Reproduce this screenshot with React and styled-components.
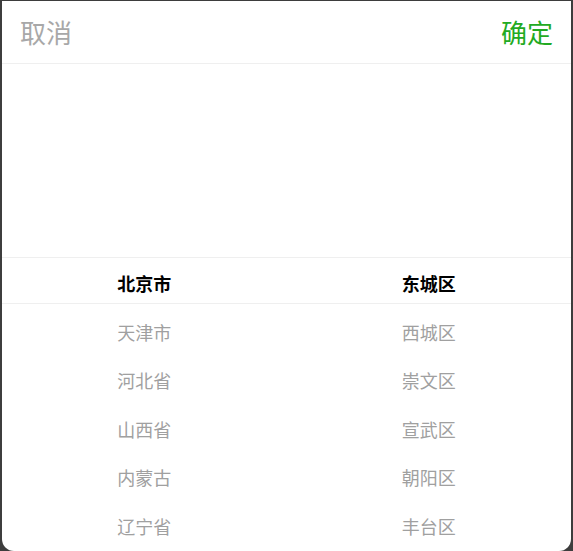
import styled, { createGlobalStyle } from "styled-components";

const provinces = ["北京市", "天津市", "河北省", "山西省", "内蒙古", "辽宁省"];
const districts = ["东城区", "西城区", "崇文区", "宣武区", "朝阳区", "丰台区"];

const GlobalStyle = createGlobalStyle`
    html, body {
        margin: 0;
        padding: 0;
        height: 100%;
        background: #3d3d3d;
        overflow: hidden;
    }
    body {
        font-family: "Noto Sans CJK SC", "Noto Sans", sans-serif;
    }
`;

export default function App() {
    return (
        <>
            <GlobalStyle />
            <Sheet>
                <Toolbar>
                    <ToolButton>取消</ToolButton>
                    <ToolButton $primary>确定</ToolButton>
                </Toolbar>
                <PickerView>
                    <Indicator />
                    <Column list={provinces} selected={0} />
                    <Column list={districts} selected={0} />
                </PickerView>
            </Sheet>
        </>
    );
}

function Column({ list, selected }) {
    return (
        <ColumnWrap>
            {list.map((name, i) => (
                <Item key={name} $active={i === selected}>
                    {name}
                </Item>
            ))}
        </ColumnWrap>
    );
}

const Sheet = styled.div`
    margin: 1px 2px 0 2px;
    height: calc(100vh - 1px);
    background: #fff;
    border-radius: 0 0 12px 12px;
    overflow: hidden;
    display: flex;
    flex-direction: column;
`;

const Toolbar = styled.div`
    height: 62px;
    display: flex;
    align-items: center;
    justify-content: space-between;
    padding: 0 18px;
    border-bottom: 1px solid #efefef;
    flex-shrink: 0;
`;

const ToolButton = styled.span`
    font-size: 26px;
    line-height: 1;
    color: ${(p) => (p.$primary ? "#22aa22" : "#a8a8a8")};
    cursor: pointer;
`;

const PickerView = styled.div`
    position: relative;
    flex: 1;
    display: grid;
    grid-template-columns: 1fr 1fr;
    align-content: start;
    padding-top: 195px;
`;

const Indicator = styled.div`
    position: absolute;
    left: 0;
    right: 0;
    top: 193px;
    height: 45px;
    border-top: 1px solid #efefef;
    border-bottom: 1px solid #efefef;
    pointer-events: none;
`;

const ColumnWrap = styled.div`
    display: flex;
    flex-direction: column;
`;

const Item = styled.div`
    height: 48.5px;
    line-height: 48.5px;
    text-align: center;
    font-size: 18px;
    font-weight: ${(p) => (p.$active ? 700 : 400)};
    color: ${(p) => (p.$active ? "#000" : "#a0a0a0")};
`;
